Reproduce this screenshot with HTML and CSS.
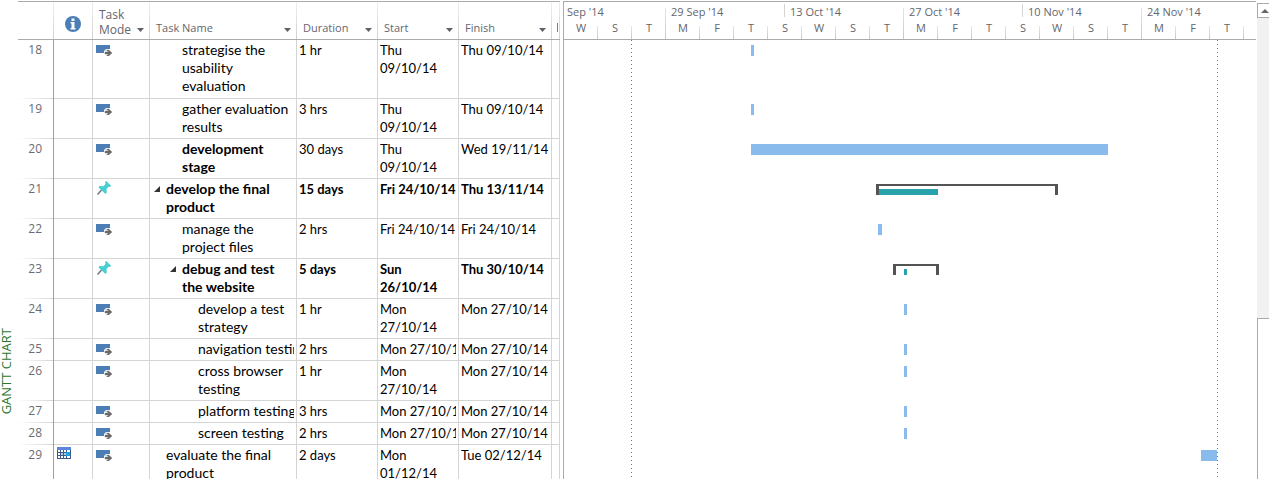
FILE: index.html
```html
<!DOCTYPE html>
<html lang="en">
<head>
<meta charset="utf-8">
<title>Gantt Chart</title>
<link rel="stylesheet" href="styles.css">
</head>
<body>
<svg class="defs" aria-hidden="true">
  <symbol id="auto" viewBox="0 0 16 11">
    <path d="M0 0h14v4H9.500v1.500H8V8H0z" fill="#4a7eb5"/>
    <path d="M9 7h3.500L10.500 5h2.200L16 8l-3.300 3h-2.200l2-2H9z" fill="#6a6a6a" stroke="#6a6a6a" stroke-width=".4"/>
  </symbol>
  <symbol id="pin" viewBox="0 0 14 14">
    <path d="M5 8.500L.5 13.500" stroke="#777" stroke-width="1.500" fill="none"/>
    <path d="M9 0l5 4.500-1 1.500-1.500-.2L9.500 8l.2 3.500L8.500 13 1.500 6.500l1-1.500 4 .3L8.500 3 8 1z" fill="#46cfd0"/>
  </symbol>
  <symbol id="down" viewBox="0 0 7 4"><path d="M0 0h7L3.500 4z" fill="#5c6068"/></symbol>
  <symbol id="open" viewBox="0 0 6 6"><path d="M6 0v6H0z" fill="#333"/></symbol>
</svg>
<main class="view">
  <div class="view-name"><span>GANTT CHART</span></div>
  <div class="sheet">
    <table class="tasks">
      <colgroup><col class="c-num"><col class="c-info"><col class="c-mode"><col class="c-name"><col class="c-time"><col class="c-time"><col class="c-finish"><col class="c-rest"></colgroup>
      <thead>
        <tr>
          <th></th>
          <th><svg class="info" viewBox="0 0 16 16" role="img" aria-label="Indicators"><circle cx="8" cy="8" r="8" fill="#4a7eb5"/><path d="M6.500 2.500h3v2.500h-3zM5.500 6h4v6h1v1.500h-5V12h1V7.500h-1z" fill="#fff"/></svg></th>
          <th><button class="head two">Task<br>Mode<svg><use href="#down"/></svg></button></th>
          <th><button class="head">Task Name<svg><use href="#down"/></svg></button></th>
          <th><button class="head">Duration<svg><use href="#down"/></svg></button></th>
          <th><button class="head">Start<svg><use href="#down"/></svg></button></th>
          <th><button class="head">Finish<svg><use href="#down"/></svg></button></th>
          <th><span class="cut"></span></th>
        </tr>
      </thead>
      <tbody>
        <tr class="l3"><td>18</td><td></td><td><svg class="auto"><use href="#auto"/></svg></td><td><div class="i2">strategise the<br>usability<br>evaluation</div></td><td><div>1 hr</div></td><td><div>Thu<br>09/10/14</div></td><td><div>Thu 09/10/14</div></td><td></td></tr>
        <tr class="l2"><td>19</td><td></td><td><svg class="auto"><use href="#auto"/></svg></td><td><div class="i2">gather evaluation<br>results</div></td><td><div>3 hrs</div></td><td><div>Thu<br>09/10/14</div></td><td><div>Thu 09/10/14</div></td><td></td></tr>
        <tr class="l2"><td>20</td><td></td><td><svg class="auto"><use href="#auto"/></svg></td><td><div class="i2"><b>development<br>stage</b></div></td><td><div>30 days</div></td><td><div>Thu<br>09/10/14</div></td><td><div>Wed 19/11/14</div></td><td></td></tr>
        <tr class="l2 summary"><td>21</td><td></td><td><svg class="pin"><use href="#pin"/></svg></td><td><div class="i1"><svg class="open"><use href="#open"/></svg>develop the final<br>product</div></td><td><div>15 days</div></td><td><div>Fri 24/10/14</div></td><td><div>Thu 13/11/14</div></td><td></td></tr>
        <tr class="l2"><td>22</td><td></td><td><svg class="auto"><use href="#auto"/></svg></td><td><div class="i2">manage the<br>project files</div></td><td><div>2 hrs</div></td><td><div>Fri 24/10/14</div></td><td><div>Fri 24/10/14</div></td><td></td></tr>
        <tr class="l2 summary"><td>23</td><td></td><td><svg class="pin"><use href="#pin"/></svg></td><td><div class="i2"><svg class="open"><use href="#open"/></svg>debug and test<br>the website</div></td><td><div>5 days</div></td><td><div>Sun<br>26/10/14</div></td><td><div>Thu 30/10/14</div></td><td></td></tr>
        <tr class="l2"><td>24</td><td></td><td><svg class="auto"><use href="#auto"/></svg></td><td><div class="i3">develop a test<br>strategy</div></td><td><div>1 hr</div></td><td><div>Mon<br>27/10/14</div></td><td><div>Mon 27/10/14</div></td><td></td></tr>
        <tr class="l1"><td>25</td><td></td><td><svg class="auto"><use href="#auto"/></svg></td><td><div class="i3">navigation testing</div></td><td><div>2 hrs</div></td><td><div>Mon 27/10/14</div></td><td><div>Mon 27/10/14</div></td><td></td></tr>
        <tr class="l2"><td>26</td><td></td><td><svg class="auto"><use href="#auto"/></svg></td><td><div class="i3">cross browser<br>testing</div></td><td><div>1 hr</div></td><td><div>Mon<br>27/10/14</div></td><td><div>Mon 27/10/14</div></td><td></td></tr>
        <tr class="l1"><td>27</td><td></td><td><svg class="auto"><use href="#auto"/></svg></td><td><div class="i3">platform testing</div></td><td><div>3 hrs</div></td><td><div>Mon 27/10/14</div></td><td><div>Mon 27/10/14</div></td><td></td></tr>
        <tr class="l1"><td>28</td><td></td><td><svg class="auto"><use href="#auto"/></svg></td><td><div class="i3">screen testing</div></td><td><div>2 hrs</div></td><td><div>Mon 27/10/14</div></td><td><div>Mon 27/10/14</div></td><td></td></tr>
        <tr class="l2"><td>29</td><td><svg class="cal" viewBox="0 0 14 12" shape-rendering="crispEdges"><path d="M0 0h14v12H0z" fill="#3c5a8c"/><path d="M0 0h14v3H0z" fill="#5a84e0"/><path d="M1 3h2v2H1zM4 3h2v2H4zM7 3h2v2H7zM10 3h3v2h-3zM1 6h2v2H1zM10 9h3v2h-3zM1 9h2v2H1zM4 9h2v2H4zM7 9h2v2H7z" fill="#fff"/><path d="M4 6h2v2H4zM7 6h2v2H7z" fill="#b9c8dc"/><path d="M9 5h4v4H9z" fill="#18a8e0"/></svg></td><td><svg class="auto"><use href="#auto"/></svg></td><td><div class="i1">evaluate the final<br>product</div></td><td><div>2 days</div></td><td><div>Mon<br>01/12/14</div></td><td><div>Tue 02/12/14</div></td><td></td></tr>
      </tbody>
    </table>
  </div>
  <section class="chart" aria-label="Timeline">
    <header class="scale">
      <div class="weeks"><span class="first tall">Sep '14</span><span>29 Sep '14</span><span class="tall">13 Oct '14</span><span>27 Oct '14</span><span class="tall">10 Nov '14</span><span>24 Nov '14</span></div>
      <div class="days"><span>W</span><span>S</span><span>T</span><span>M</span><span>F</span><span>T</span><span>S</span><span>W</span><span>S</span><span>T</span><span>M</span><span>F</span><span>T</span><span>S</span><span>W</span><span>S</span><span>T</span><span>M</span><span>F</span><span>T</span></div>
    </header>
    <div class="plot">
      <i class="mark" style="left:67px"></i><i class="mark" style="left:653px"></i>
      <div class="lane l3"><i class="bar" style="left:187px;width:3px"></i></div>
      <div class="lane l2"><i class="bar" style="left:187px;width:3px"></i></div>
      <div class="lane l2"><i class="bar" style="left:187px;width:357px"></i></div>
      <div class="lane l2"><i class="bracket" style="left:312px;width:182px"></i><i class="progress" style="left:315px;width:59px"></i></div>
      <div class="lane l2"><i class="bar" style="left:314px;width:4px"></i></div>
      <div class="lane l2"><i class="bracket" style="left:329px;width:46px"></i><i class="progress" style="left:340px;width:3px"></i></div>
      <div class="lane l2"><i class="bar" style="left:340px;width:3px"></i></div>
      <div class="lane l1"><i class="bar" style="left:340px;width:3px"></i></div>
      <div class="lane l2"><i class="bar" style="left:340px;width:3px"></i></div>
      <div class="lane l1"><i class="bar" style="left:340px;width:3px"></i></div>
      <div class="lane l1"><i class="bar" style="left:340px;width:3px"></i></div>
      <div class="lane l2"><i class="bar" style="left:637px;width:16px"></i></div>
    </div>
  </section>
  <div class="scroll">
    <button class="up" aria-label="Scroll up"><svg viewBox="0 0 8 4"><path d="M4 0l4 4H0z" fill="#666"/></svg></button>
    <div class="track"></div>
    <div class="thumb"></div>
  </div>
</main>
</body>
</html>
```

FILE: styles.css
```css
* { box-sizing: border-box; }
body { margin: 0; background: #fff; overflow: hidden; font-family: Lato, Carlito, sans-serif; font-size: 13px; line-height: 18px; color: #000; }
button { border: 0; padding: 0; background: none; font: inherit; color: inherit; text-align: left; }
svg { display: block; }
.defs { display: none; }

.view { display: flex; height: 100vh; padding-top: 1px; overflow: hidden; }
.view-name { flex: none; width: 18px; padding-top: 327px; font: 13px/12px "Open Sans", sans-serif; color: #2c772c; }
.view-name span { display: block; writing-mode: vertical-rl; transform: rotate(180deg); white-space: nowrap; width: 12px; }

.sheet { flex: none; margin-right: 3px; }
.tasks { width: 542px; table-layout: fixed; border-collapse: separate; border-spacing: 0; border-top: 1px solid #ababab; }
.c-num { width: 36px; }
.c-info { width: 39px; }
.c-mode { width: 57px; }
.c-name { width: 147px; }
.c-time { width: 81px; }
.c-finish { width: 93px; }
.c-rest { width: 8px; }

th { height: 38px; padding: 0; border-bottom: 1px solid #ababab; background: linear-gradient(#f0f0f0, #d0d0d0) right / 1px 100% no-repeat; font: 12px/15px "Open Sans", sans-serif; color: #64666e; vertical-align: bottom; }
.info { width: 16px; height: 16px; margin: 0 auto 7px 11px; }
.head { display: block; position: relative; width: 100%; padding: 0 0 4px 6px; font-size: 11px; }
.two { padding-bottom: 2px; font-size: 12px; }
.head svg { position: absolute; right: 6px; bottom: 7px; width: 7px; height: 4px; }
.cut { display: block; width: 1px; height: 9px; margin: 0 0 7px 5px; background: #a86a78; }

td { padding: 1px 2px 0; border-right: 1px solid #d4d4d4; border-bottom: 1px solid #d4d4d4; vertical-align: top; white-space: nowrap; }
td:first-child { padding: 1px 11px 0 0; border-right-color: #a0a0a0; border-bottom: 0; background: linear-gradient(90deg, #fff, #d4d4d4) bottom / 100% 1px no-repeat; text-align: right; font: 12px/18px "Open Sans", sans-serif; color: #6a6c74; }
td:nth-child(4) { font-size: 14px; }
td div { overflow: hidden; }
.l3 { height: 59px; }
.l2 { height: 40px; }
.l1 { height: 22px; }
.summary div { font-weight: bold; }
.i1 { padding-left: 14px; }
.i2 { padding-left: 30px; }
.i3 { padding-left: 46px; }
.open { float: left; width: 6px; height: 6px; margin: 6px 0 0 -12px; }
.auto { width: 16px; height: 11px; margin: 4px 0 0 1px; }
.pin { width: 14px; height: 14px; margin: 1px 0 0 2px; }
.cal { width: 14px; height: 12px; margin: 1px 0 0 1px; }

.chart { flex: 1; min-width: 0; overflow: hidden; border-left: 1px solid #ababab; border-top: 1px solid #ababab; }
.scale { height: 38px; border-bottom: 1px solid #ababab; font: 11px/16px "Open Sans", sans-serif; color: #64666e; overflow: hidden; }
.weeks { display: flex; height: 18px; padding-top: 2px; }
.weeks span { flex: none; position: relative; width: 119px; height: 13px; padding-left: 5px; border-right: 1px solid #d4d4d4; white-space: nowrap; }
.weeks .first { width: 102px; padding-left: 3px; }
.weeks .tall { border-right-color: transparent; }
.weeks .tall::after { content: ""; position: absolute; right: -1px; top: 4px; width: 1px; height: 31px; background: linear-gradient(#e6e6e6, #c8c8c8); }
.days { display: flex; height: 19px; }
.days span { flex: none; width: 34px; text-align: center; background: linear-gradient(#e6e6e6, #c8c8c8) right 6px / 1px 13px no-repeat; }
.days span { background-position: right 6px; }

.plot { position: relative; }
.lane { position: relative; }
.mark { position: absolute; top: 0; width: 1px; height: 100%; background: repeating-linear-gradient(#777 0 1px, transparent 1px 4px); }
.bar, .bracket, .progress { position: absolute; top: 5px; height: 11px; }
.bar { background: #8abbed; }
.bracket { border: solid #545454; border-width: 2px 3px 0; }
.progress { top: 10px; height: 6px; background: #2aa2ab; }

.scroll { flex: none; display: flex; flex-direction: column; width: 12px; margin-left: 1px; padding-top: 2px; overflow: hidden; }
.up { flex: none; width: 15px; height: 15px; padding-left: 3px; border: 1px solid #ababab; }
.up svg { width: 8px; height: 4px; }
.track { flex: 301; background: #f1f1f1; }
.thumb { flex: 160; width: 17px; border: 1px solid #ababab; border-bottom: 0; }
```
